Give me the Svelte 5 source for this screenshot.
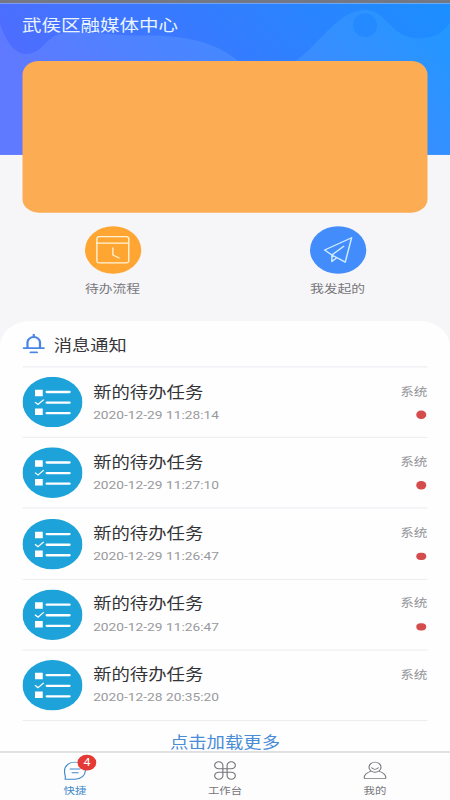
<script lang="ts">
  type Message = { title: string; time: string; from: string; unread: boolean };

  const messages: Message[] = [
    { title: '新的待办任务', time: '2020-12-29 11:28:14', from: '系统', unread: true },
    { title: '新的待办任务', time: '2020-12-29 11:27:10', from: '系统', unread: true },
    { title: '新的待办任务', time: '2020-12-29 11:26:47', from: '系统', unread: true },
    { title: '新的待办任务', time: '2020-12-29 11:26:47', from: '系统', unread: true },
    { title: '新的待办任务', time: '2020-12-28 20:35:20', from: '系统', unread: false },
  ];

  const tabs = [
    { id: 'quick', label: '快捷' },
    { id: 'work', label: '工作台' },
    { id: 'mine', label: '我的' },
  ];

  let active = $state('quick');
  let unread = $derived(messages.filter((m) => m.unread).length);
</script>

<div class="screen">
  <main>
    <header class="hero">
      <svg class="waves" viewBox="0 0 450 155" preserveAspectRatio="none" aria-hidden="true">
        <defs>
          <linearGradient id="sky" x1="0" y1="0.3" x2="1" y2="0">
            <stop offset="0" stop-color="#4f6cff" />
            <stop offset="0.5" stop-color="#337dff" />
            <stop offset="1" stop-color="#1b8fff" />
          </linearGradient>
          <linearGradient id="swell" x1="0" y1="0.3" x2="1" y2="0">
            <stop offset="0" stop-color="#5f79ff" />
            <stop offset="0.5" stop-color="#4389ff" />
            <stop offset="1" stop-color="#2098ff" />
          </linearGradient>
        </defs>
        <rect width="450" height="155" fill="url(#sky)" />
        <path
          fill="url(#swell)"
          d="M0 21C6 40 15 52 27 52C42 52 47 33 62 31C85 27 112 34 145 33C190 33 217 41 238 59C255 72 282 72 302 54C325 34 341 7 365 7C388 7 389 36 420 36C435 36 444 29 450 20V155H0Z"
        />
        <circle cx="365" cy="22.5" r="12" fill="#2589ff" />
      </svg>
      <h1>武侯区融媒体中心</h1>
      <div class="banner"></div>
    </header>

    <nav class="shortcuts">
      <a class="shortcut" href="#todo">
        <span class="shortcut-icon todo">
          <svg viewBox="0 0 45 45" fill="none" stroke="#fff3da" stroke-width="1.1" stroke-linejoin="round" stroke-linecap="round">
            <rect x="9.5" y="9.8" width="25.5" height="25" rx="2" />
            <path d="M9.5 16H35M22.3 20.5v6.8l5 2.7" />
          </svg>
        </span>
        <span>待办流程</span>
      </a>
      <a class="shortcut" href="#started">
        <span class="shortcut-icon started">
          <svg viewBox="0 0 45 45" fill="none" stroke="#cdeaff" stroke-width="1.2" stroke-linejoin="round" stroke-linecap="round">
            <path d="M33.3 10.8L11.7 22.5L17.5 27.3L28.2 34L33.3 10.8ZM17.5 27.3V33.5L21.4 29.8M17.5 27.3L27 19" />
          </svg>
        </span>
        <span>我发起的</span>
      </a>
    </nav>

    <section class="notices">
      <h2>
        <svg class="bell" viewBox="0 0 18 19" fill="none" stroke="#4a85e6" stroke-width="1.8" stroke-linecap="round">
          <path d="M4 13.3V8.2a5 5 0 0 1 10 0v5.1M1 13.7h16M6.5 17.8h5M9 1v1.8" />
        </svg>
        消息通知
      </h2>
      <ul>
        {#each messages as message}
          <li class="message">
            <svg class="avatar" viewBox="0 0 48 48" aria-hidden="true">
              <circle cx="24" cy="24" r="24" fill="#1da3da" />
              <path fill="#fff" d="M10 12.2h6.2v6.2H10zM10 30h6.2v6.2H10z" />
              <path
                fill="none"
                stroke="#fff"
                stroke-width="2.2"
                stroke-linecap="round"
                d="M19.5 14.4h18M19.5 24.5h18M19.5 34.5h18"
              />
              <path fill="none" stroke="#fff" stroke-width="1.1" d="M10 24l2.4 2.3l4.6-4.6" />
            </svg>
            <div class="message-text">
              <strong>{message.title}</strong>
              <time>{message.time}</time>
            </div>
            <div class="message-meta">
              <span>{message.from}</span>
              {#if message.unread}<i class="dot"></i>{/if}
            </div>
          </li>
        {/each}
      </ul>
      <button class="more">点击加载更多</button>
    </section>
  </main>

  <footer class="tabbar">
    {#each tabs as tab}
      <button class="tab" class:active={active === tab.id} onclick={() => (active = tab.id)}>
        <span class="tab-icon">
          <svg viewBox="0 0 20 20" fill="none" stroke="currentColor" stroke-width="0.9" stroke-linecap="round" stroke-linejoin="round">
            {#if tab.id === 'quick'}
              <path d="M2 18.2C2.9 16.5 1.6 14 1.6 10.6C1.6 5.6 5.2 2 10 2s8.3 3.4 8.3 8-3.4 8.2-8.3 8.2zM6 8.6h8M7.6 12.2h5" />
            {:else if tab.id === 'work'}
              <path d="M8.3 8.3H5.2a3.3 3.3 0 1 1 3.1-3.2v9.8a3.3 3.3 0 1 1-3.1-3.2h9.6a3.3 3.3 0 1 1-3.1 3.2V5.1a3.3 3.3 0 1 1 3.1 3.2z" />
            {:else}
              <circle cx="10" cy="6.8" r="4.8" />
              <path d="M7.3 7.4q2.7 3 5.4 0M6.5 10.8C3.4 12 1.5 14 1.3 16.8c0 .6.4.9 1 .9h15.4c.6 0 1-.3 1-.9c-.2-2.8-2.1-4.8-5.2-6" />
            {/if}
          </svg>
          {#if tab.id === 'quick' && unread}<b class="badge">{unread}</b>{/if}
        </span>
        <span>{tab.label}</span>
      </button>
    {/each}
  </footer>
</div>

<style>
  :global(body) {
    margin: 0;
    min-height: 100vh;
    background: #f6f5f8;
  }
  .screen {
    display: flex;
    flex-direction: column;
    width: 360px;
    height: 760px;
    overflow: hidden;
    transform: scale(1.25, 1.05263);
    transform-origin: 0 0;
    background: #f6f5f8;
    font-family: Roboto, 'Noto Sans CJK SC', sans-serif;
    color: #333;
  }
  main {
    flex: 1;
    min-height: 0;
    display: flex;
    flex-direction: column;
  }
  .hero {
    position: relative;
    box-sizing: border-box;
    flex: none;
    height: 202px;
    padding: 0 17.7px;
    border-top: 3px solid #747784;
  }
  .waves {
    position: absolute;
    top: 0;
    left: 0;
    width: 360px;
    height: 144.2px;
  }
  h1 {
    position: relative;
    margin: 0;
    height: 55.2px;
    line-height: 42px;
    font-size: 15.6px;
    font-weight: 400;
    color: #e9f4ff;
  }
  .banner {
    position: relative;
    height: 144px;
    border-radius: 13px;
    background: #fcac52;
  }
  .shortcuts {
    display: flex;
    flex: none;
    height: 89.9px;
    padding-top: 13.1px;
  }
  .shortcut {
    flex: 1;
    display: flex;
    flex-direction: column;
    align-items: center;
    gap: 6.6px;
    font-size: 11px;
    line-height: 16px;
    color: #77777b;
    text-decoration: none;
  }
  .shortcut-icon {
    width: 45px;
    height: 45px;
    border-radius: 50%;
  }
  .shortcut-icon svg { display: block; }
  .todo { background: #ffa632; }
  .started { background: #438cfc; }
  .notices {
    flex: 1;
    padding: 0 18px;
    border-radius: 24px 24px 0 0;
    background: #fefefe;
  }
  h2 {
    display: flex;
    align-items: center;
    gap: 7px;
    margin: 0;
    height: 43.1px;
    font-size: 14.6px;
    font-weight: 400;
    color: #38383c;
  }
  .bell {
    width: 18px;
    height: 19px;
  }
  ul {
    margin: 0;
    padding: 0;
    list-style: none;
    border-bottom: 1px solid #ededf2;
  }
  .message {
    box-sizing: border-box;
    display: flex;
    align-items: center;
    height: 67.2px;
    border-top: 1px solid #ededf2;
  }
  .avatar {
    width: 48px;
    height: 48px;
    flex-shrink: 0;
  }
  .message-text {
    flex: 1;
    display: flex;
    flex-direction: column;
    gap: 4px;
    padding-left: 8.5px;
  }
  .message-text strong {
    font-size: 14.7px;
    line-height: 20px;
    font-weight: 400;
    color: #333337;
  }
  .message-text time {
    font-size: 11px;
    line-height: 15px;
    color: #99999d;
  }
  .message-meta {
    align-self: stretch;
    display: flex;
    flex-direction: column;
    align-items: flex-end;
    padding-top: 15.8px;
    font-size: 10.9px;
    line-height: 16px;
    color: #939398;
  }
  .dot {
    width: 7.6px;
    height: 7.6px;
    margin: 9.4px 1.4px 0 0;
    border-radius: 50%;
    background: #d54c4c;
  }
  button {
    border: 0;
    background: none;
    font-family: inherit;
    cursor: pointer;
  }
  .more {
    display: block;
    margin: 14px auto 0;
    padding: 0;
    font-size: 14.7px;
    line-height: 15px;
    color: #4a8cd6;
  }
  .tabbar {
    display: flex;
    flex: none;
    box-sizing: border-box;
    height: 46px;
    border-top: 1px solid #bdbdc0;
  }
  .tab {
    flex: 1;
    display: flex;
    flex-direction: column;
    align-items: center;
    gap: 2.5px;
    padding: 6.5px 0 0;
    font-size: 9.1px;
    line-height: 14px;
    color: #75757a;
    background: #fdfdfe;
  }
  .tab.active { color: #3d88cb; }
  .tab-icon {
    position: relative;
    width: 20px;
    height: 20px;
  }
  .tab-icon svg { display: block; }
  .badge {
    position: absolute;
    top: -4.5px;
    left: 12.2px;
    width: 14.8px;
    height: 14.8px;
    border-radius: 50%;
    background: #e53935;
    color: #fff;
    font-size: 10px;
    font-weight: 400;
    line-height: 15px;
    text-align: center;
  }
</style>
